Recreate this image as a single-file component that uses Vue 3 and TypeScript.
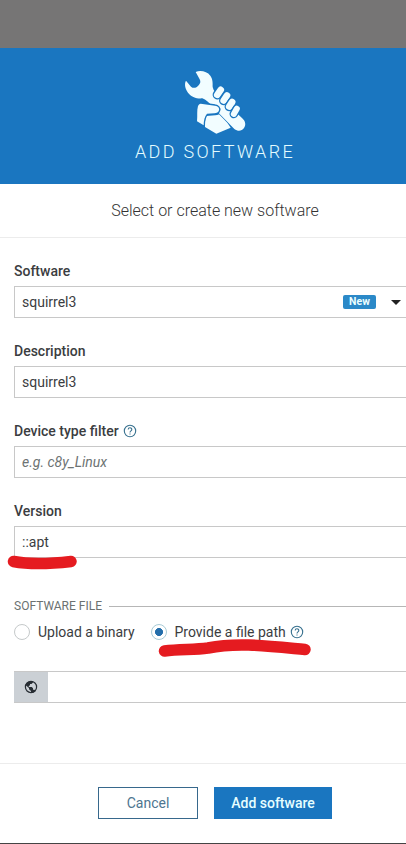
<script setup lang="ts">
import { ref } from 'vue'

interface Field {
  id: string
  label: string
  value: string
  placeholder?: string
  help?: boolean
  isNew?: boolean
  marked?: boolean
}

const fields = ref<Field[]>([
  { id: 'software', label: 'Software', value: 'squirrel3', isNew: true },
  { id: 'description', label: 'Description', value: 'squirrel3' },
  { id: 'filter', label: 'Device type filter', value: '', placeholder: 'e.g. c8y_Linux', help: true },
  { id: 'version', label: 'Version', value: '::apt', marked: true },
])
const source = ref<'binary' | 'path'>('path')
const path = ref('')
</script>

<template>
  <div class="screen">
    <div class="dialog">
      <header class="head">
        <svg class="tool" viewBox="39 30 192 192" fill="#f2fdff">
          <path d="M109 168L136 166C144 165 149 162 153 158L182 203L139 221L105 201C104 189 105 177 109 168Z" />
          <path stroke="#1a76c0" stroke-width="4" paint-order="stroke" d="M77 36C91 30 111 34 121 47C129 58 128 71 128 81C130 92 139 102 149 112L216 174C226 183 229 194 222 204C214 215 203 214 193 207L125 137C116 128 108 119 97 115C81 117 63 110 54 98C46 87 42 72 48 62L63 80C69 85 77 85 84 78C91 71 93 66 89 58Z" />
          <g stroke="#1a76c0" stroke-width="8" paint-order="stroke">
            <rect x="-10" y="-19" width="20" height="38" rx="10" transform="translate(147 97) rotate(35)" />
            <rect x="-10" y="-19" width="20" height="38" rx="10" transform="translate(166 114) rotate(33)" />
            <rect x="-10" y="-18" width="20" height="36" rx="10" transform="translate(182 133) rotate(33)" />
            <rect x="-9" y="-18" width="18" height="36" rx="9" transform="translate(196 154) rotate(30)" />
            <path d="M92 131L135 137C144 138 149 144 147 151C145 158 140 160 133 160L111 161C104 169 101 182 101 196L81 184C83 166 80 151 84 138C86 134 88 131 92 131Z" />
          </g>
        </svg>
        <h1>ADD SOFTWARE</h1>
      </header>
      <p class="subtitle"><span>Select or create new software</span></p>

      <form class="form" @submit.prevent>
        <div v-for="f in fields" :key="f.id" class="field">
          <label :for="f.id">
            <span>{{ f.label }}</span>
            <svg v-if="f.help" class="help" viewBox="0 0 14 14">
              <circle cx="7" cy="7" r="5.7" />
              <path d="M5.2 5.6C5.2 3.2 8.8 3.2 8.8 5.5C8.8 6.8 7 6.9 7 8.4M7 9.4V10.6" />
            </svg>
          </label>
          <div class="control">
            <input :id="f.id" v-model="f.value" :placeholder="f.placeholder" autocomplete="off" spellcheck="false" />
            <span v-if="f.isNew" class="badge">New</span>
            <i v-if="f.isNew" class="caret"></i>
            <svg v-if="f.marked" class="mark short" viewBox="0 0 72 18">
              <path d="M6.5 6.5C22 9.5 42 9 64 6.5" />
            </svg>
          </div>
        </div>

        <div class="legend"><span>SOFTWARE FILE</span></div>
        <div class="radios">
          <label class="option">
            <input v-model="source" type="radio" value="binary" />
            <span>Upload a binary</span>
          </label>
          <label class="option">
            <input v-model="source" type="radio" value="path" />
            <span>Provide a file path</span>
            <svg class="help" viewBox="0 0 14 14">
              <circle cx="7" cy="7" r="5.7" />
              <path d="M5.2 5.6C5.2 3.2 8.8 3.2 8.8 5.5C8.8 6.8 7 6.9 7 8.4M7 9.4V10.6" />
            </svg>
          </label>
          <svg class="mark long" viewBox="0 0 156 22">
            <path d="M7.5 14C23 12 37 13 51 11C80 5 111 9 148 12.5" />
          </svg>
        </div>
        <div class="group">
          <span class="addon">
            <svg viewBox="0 0 14 14">
              <circle cx="7" cy="7" r="5.6" fill="none" stroke="#272d33" stroke-width="1.2" />
              <path fill="#272d33" d="M1.5 5C2 3 4 1.3 7 1.2H9V2.5L7.5 4H6V5.3L4.8 6V7H7.8L9 8.2V9.8H10.5L11.5 11L9.8 12.4L7 13V11L5 9.3V8L2 5.6Z" />
            </svg>
          </span>
          <input v-model="path" aria-label="File path" />
        </div>
      </form>

      <footer class="foot">
        <button type="button" class="cancel">Cancel</button>
        <button type="button" class="submit">Add software</button>
      </footer>
    </div>
  </div>
</template>

<style>
body {
  overflow: hidden;
}
</style>

<style scoped>
.screen {
  box-sizing: border-box;
  width: 100%;
  height: 844px;
  padding-top: 48px;
  overflow: hidden;
  background: #767575;
  font-family: Roboto, sans-serif;
  font-size: 14px;
  color: #3b3d3f;
}
.dialog {
  display: flex;
  flex-direction: column;
  box-sizing: border-box;
  width: 430px;
  height: 796px;
  background: #fff;
  border-bottom: 1px solid #444;
}
.head {
  display: flex;
  flex-direction: column;
  align-items: center;
  box-sizing: border-box;
  height: 136px;
  padding-top: 22px;
  background: #1a76c0;
}
.tool {
  width: 64px;
  height: 64px;
}
h1 {
  margin: 7px 0 0;
  font-size: 18px;
  line-height: 22px;
  font-weight: 300;
  letter-spacing: 2.35px;
  color: #e4fcff;
}
.subtitle {
  display: flex;
  align-items: center;
  justify-content: center;
  box-sizing: border-box;
  height: 54px;
  margin: 0;
  border-bottom: 1px solid #ececec;
  font-size: 16px;
  font-weight: 300;
  color: #333;
}
.form {
  padding: 22px 14px 0;
}
.field {
  height: 80px;
}
.field > label {
  display: flex;
  align-items: center;
  gap: 4px;
  height: 22px;
  font-weight: 500;
}
.help {
  width: 14px;
  height: 14px;
  fill: none;
  stroke: #38718f;
  stroke-width: 1.1;
}
.control {
  position: relative;
  display: flex;
  align-items: center;
  box-sizing: border-box;
  height: 32px;
  margin-top: 4px;
  border: 1px solid #c8c8c8;
}
.control input,
.group input {
  flex: 1;
  min-width: 0;
  padding: 0 7px;
  border: 0;
  outline: 0;
  background: transparent;
  font: 14px Roboto, sans-serif;
  color: #3b3d3f;
}
.control input::placeholder {
  font-style: italic;
  color: #6d7373;
  opacity: 1;
}
.badge {
  width: 33px;
  height: 14px;
  margin-right: 15px;
  border-radius: 2px;
  background: #2b89c8;
  color: #edffff;
  font-size: 10.5px;
  line-height: 14px;
  font-weight: 700;
  text-align: center;
}
.caret {
  margin-right: 14px;
  border: 5px solid transparent;
  border-top-color: #222;
  border-bottom: 0;
}
.mark {
  position: absolute;
  fill: none;
  stroke: #e51b20;
  stroke-width: 11.5;
  stroke-linecap: round;
}
.short {
  left: -8px;
  top: 28px;
  width: 72px;
  height: 18px;
}
.legend {
  display: flex;
  align-items: center;
  gap: 7px;
  height: 18px;
  margin-top: 17px;
  font-size: 12px;
  color: #6b7171;
}
.legend::after {
  content: '';
  flex: 1;
  height: 1px;
  background: #b6b6b6;
}
.radios {
  position: relative;
  display: flex;
  gap: 16px;
  height: 34px;
  padding-top: 1px;
}
.option {
  display: flex;
  align-items: center;
  height: 32px;
}
.option input {
  appearance: none;
  box-sizing: border-box;
  width: 16px;
  height: 16px;
  margin: 0 8px 0 0;
  border: 1px solid #c5c9ca;
  border-radius: 50%;
  background: #fff;
}
.option input:checked {
  border-color: #a8cbd6;
  background: radial-gradient(circle, #246eab 0 3.7px, #fff 4.3px);
}
.option .help {
  margin-left: 4px;
}
.long {
  left: 143px;
  top: 22px;
  width: 156px;
  height: 22px;
}
.group {
  display: flex;
  box-sizing: border-box;
  height: 32px;
  margin-top: 21px;
  border: 1px solid #c8c8c8;
  border-left: 0;
}
.addon {
  display: flex;
  align-items: center;
  justify-content: center;
  width: 34px;
  background: #cbd0d5;
}
.addon svg {
  width: 14px;
  height: 14px;
}
.foot {
  display: flex;
  align-items: center;
  justify-content: center;
  gap: 16px;
  height: 78px;
  padding-bottom: 1px;
  margin-top: auto;
  border-top: 1px solid #ececec;
}
.foot button {
  box-sizing: border-box;
  height: 32px;
  padding: 0 0 1px;
  border: 1px solid #1a76c0;
  border-radius: 0;
  font: 14px Roboto, sans-serif;
}
.foot .cancel {
  width: 100px;
  border-color: #37688c;
  background: #fff;
  color: #4e7590;
}
.foot .submit {
  width: 118px;
  background: #1a76c0;
  color: #e6feff;
  font-weight: 500;
}
</style>
